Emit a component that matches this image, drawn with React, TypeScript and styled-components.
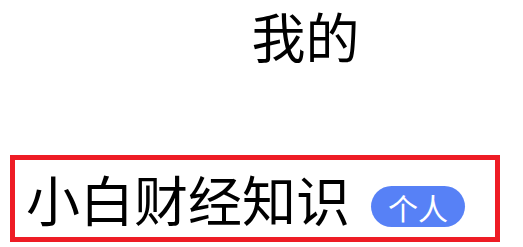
import React from "react";
import styled, { createGlobalStyle } from "styled-components";

const GlobalStyle = createGlobalStyle`
  html, body { margin: 0; padding: 0; background: #ffffff; }
  body { font-family: "Noto Sans CJK SC", "Noto Sans", sans-serif; }
`;

const Page = styled.div`
  width: 523px;
  height: 247px;
  display: flex;
  flex-direction: column;
  box-sizing: border-box;
  padding: 0 0 0 10px;
`;

const Header = styled.header`
  height: 155px;
  box-sizing: border-box;
  padding: 4px 0 0 78px;
  text-align: center;
`;

const Title = styled.div`
  font-size: 54px;
  font-weight: 400;
  line-height: 1.2;
  color: #000;
  white-space: nowrap;
`;

const Card = styled.div`
  width: 490px;
  height: 87px;
  box-sizing: border-box;
  border: 5px solid #ee1c25;
  display: flex;
  align-items: flex-start;
  padding: 12px 0 0 11px;
  gap: 21px;
`;

const Name = styled.span`
  font-size: 54px;
  line-height: 1;
  color: #000;
`;

const Badge = styled.span`
  display: inline-flex;
  align-items: center;
  justify-content: center;
  margin-top: 14px;
  width: 94px;
  height: 41px;
  border-radius: 21px;
  background: #5781f6;
  color: #fff;
  font-size: 30px;
  line-height: 1;
`;

export default function App() {
  return (
    <>
      <GlobalStyle />
      <Page>
        <Header>
          <Title>我的</Title>
        </Header>
        <Card>
          <Name>小白财经知识</Name>
          <Badge>个人</Badge>
        </Card>
      </Page>
    </>
  );
}
